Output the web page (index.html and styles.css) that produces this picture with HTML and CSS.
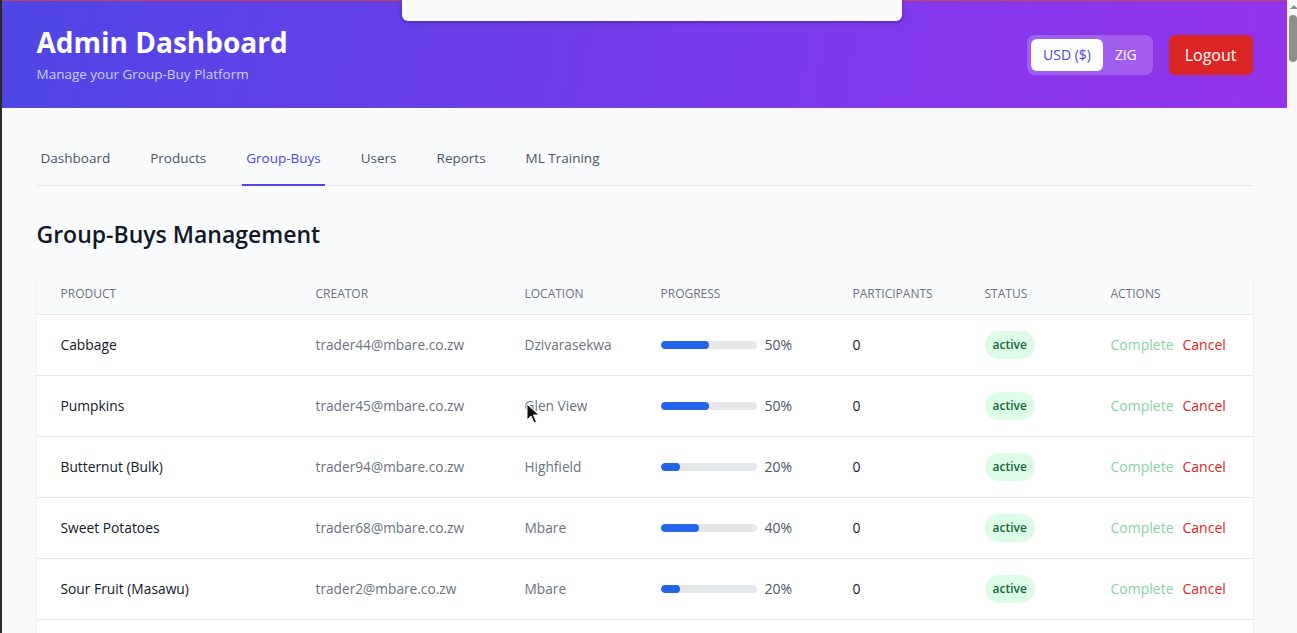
FILE: index.html
```html
<!DOCTYPE html>
<html lang="en">
<head>
<meta charset="utf-8">
<title>Admin Dashboard</title>
<link rel="stylesheet" href="styles.css">
</head>
<body>
<div class="frame-edge"></div>
<div class="page">
  <div class="topline"></div>
  <header class="hero">
    <div class="container hero-inner">
      <div class="hero-titles">
        <h1 class="hero-title">Admin Dashboard</h1>
        <p class="hero-sub">Manage your Group-Buy Platform</p>
      </div>
      <div class="hero-actions">
        <div class="currency">
          <button class="cur-btn cur-active">USD ($)</button>
          <button class="cur-btn">ZiG</button>
        </div>
        <button class="logout">Logout</button>
      </div>
    </div>
  </header>

  <main class="container main">
    <nav class="tabs">
      <a class="tab">Dashboard</a>
      <a class="tab">Products</a>
      <a class="tab tab-active">Group-Buys</a>
      <a class="tab">Users</a>
      <a class="tab">Reports</a>
      <a class="tab">ML Training</a>
    </nav>

    <h2 class="section-title">Group-Buys Management</h2>

    <div class="card">
      <table class="gb-table">
        <colgroup>
          <col class="c1"><col class="c2"><col class="c3"><col class="c4"><col class="c5"><col class="c6"><col class="c7">
        </colgroup>
        <thead>
          <tr>
            <th>Product</th><th>Creator</th><th>Location</th><th>Progress</th><th>Participants</th><th>Status</th><th>Actions</th>
          </tr>
        </thead>
        <tbody>
          <tr>
            <td class="prod">Cabbage</td><td class="muted">trader44@mbare.co.zw</td><td class="muted">Dzivarasekwa</td>
            <td><div class="prog"><div class="bar"><div class="fill" style="width:50%"></div></div><span class="pct">50%</span></div></td>
            <td class="num">0</td><td><span class="badge">active</span></td>
            <td><span class="act-complete">Complete</span><span class="act-cancel">Cancel</span></td>
          </tr>
          <tr>
            <td class="prod">Pumpkins</td><td class="muted">trader45@mbare.co.zw</td><td class="muted">Glen View</td>
            <td><div class="prog"><div class="bar"><div class="fill" style="width:50%"></div></div><span class="pct">50%</span></div></td>
            <td class="num">0</td><td><span class="badge">active</span></td>
            <td><span class="act-complete">Complete</span><span class="act-cancel">Cancel</span></td>
          </tr>
          <tr>
            <td class="prod">Butternut (Bulk)</td><td class="muted">trader94@mbare.co.zw</td><td class="muted">Highfield</td>
            <td><div class="prog"><div class="bar"><div class="fill" style="width:20%"></div></div><span class="pct">20%</span></div></td>
            <td class="num">0</td><td><span class="badge">active</span></td>
            <td><span class="act-complete">Complete</span><span class="act-cancel">Cancel</span></td>
          </tr>
          <tr>
            <td class="prod">Sweet Potatoes</td><td class="muted">trader68@mbare.co.zw</td><td class="muted">Mbare</td>
            <td><div class="prog"><div class="bar"><div class="fill" style="width:40%"></div></div><span class="pct">40%</span></div></td>
            <td class="num">0</td><td><span class="badge">active</span></td>
            <td><span class="act-complete">Complete</span><span class="act-cancel">Cancel</span></td>
          </tr>
          <tr>
            <td class="prod">Sour Fruit (Masawu)</td><td class="muted">trader2@mbare.co.zw</td><td class="muted">Mbare</td>
            <td><div class="prog"><div class="bar"><div class="fill" style="width:20%"></div></div><span class="pct">20%</span></div></td>
            <td class="num">0</td><td><span class="badge">active</span></td>
            <td><span class="act-complete">Complete</span><span class="act-cancel">Cancel</span></td>
          </tr>
          <tr class="row-empty">
            <td></td><td></td><td></td><td></td><td></td><td></td><td></td>
          </tr>
        </tbody>
      </table>
    </div>
  </main>
  <div class="popup"></div>
  <svg class="cursor" width="14" height="22" viewBox="0 0 14 22"><path d="M1 1 L1 17 L5 13 L8 20 L10.5 19 L7.5 12 L13 12 Z" fill="#111" stroke="#fff" stroke-width="1"/></svg>
</div>
<div class="scrollbar">
  <div class="sb-arrow"></div>
  <div class="sb-thumb"></div>
</div>
</body>
</html>
```
FILE: styles.css
```css
* { box-sizing: border-box; }
html, body { margin: 0; padding: 0; height: 100%; }
body {
  display: flex;
  overflow: hidden;
  background: #2d2b29;
  font-family: "Open Sans", "Noto Sans", sans-serif;
  color: #111827;
}
.frame-edge { width: 2px; flex: 0 0 2px; }
.page {
  flex: 1;
  position: relative;
  background: #f9fafb;
  overflow: hidden;
}
.topline { height: 1px; background: #c8405c; }
.container { width: 1216px; margin: 0 auto; }
.hero {
  background: linear-gradient(100deg, #4f46e5 0%, #7c3aed 60%, #9333ea 100%);
  height: 107px;
}
.hero-inner {
  display: flex;
  justify-content: space-between;
  align-items: flex-start;
  height: 100%;
  padding-top: 24px;
}
.hero-title {
  margin: 0;
  font-size: 28px;
  line-height: 34px;
  font-weight: 700;
  color: #fff;
}
.hero-sub {
  margin: 5px 0 0;
  font-size: 13.5px;
  line-height: 20px;
  color: #c7d2fe;
}
.hero-actions { display: flex; align-items: center; gap: 16px; margin-top: 10px; }
.currency {
  display: flex;
  padding: 4px;
  background: rgba(255,255,255,0.2);
  border-radius: 8px;
}
.cur-btn {
  font-family: inherit;
  border: 0;
  background: transparent;
  color: #fff;
  font-size: 14px;
  line-height: 20px;
  padding: 6px 12px;
  border-radius: 6px;
  font-weight: 500;
}
.cur-active { background: #fff; color: #4f46e5; }
.logout {
  font-family: inherit;
  border: 0;
  background: #dc2626;
  color: #fff;
  font-size: 16px;
  line-height: 24px;
  padding: 8px 16px;
  border-radius: 6px;
}
.main { padding-top: 24px; }
.tabs {
  display: flex;
  gap: 32px;
  border-bottom: 1px solid #e5e7eb;
}
.tab {
  padding: 16px 4px;
  font-size: 13.5px;
  line-height: 20px;
  font-weight: 500;
  color: #4b5563;
  margin-bottom: -1px;
  border-bottom: 2px solid transparent;
}
.tab-active { color: #4f46e5; border-bottom-color: #4f46e5; }
.section-title {
  margin: 32px 0 24px;
  font-size: 23px;
  line-height: 32px;
  font-weight: 600;
  color: #111827;
}
.card {
  background: #fff;
  border-radius: 8px;
  box-shadow: 0 1px 3px rgba(0,0,0,0.08), 0 1px 2px rgba(0,0,0,0.04);
  overflow: hidden;
}
.gb-table { width: 100%; border-collapse: collapse; table-layout: fixed; }
.c1 { width: 255px; } .c2 { width: 209px; } .c3 { width: 136px; } .c4 { width: 192px; }
.c5 { width: 132px; } .c6 { width: 126px; } .c7 { width: 166px; }
.gb-table th {
  background: #f9fafb;
  text-align: left;
  font-size: 12px;
  line-height: 16px;
  font-weight: 500;
  color: #6b7280;
  text-transform: uppercase;
  padding: 12px 24px;
  border-bottom: 1px solid #e5e7eb;
  white-space: nowrap;
}
.gb-table td {
  padding: 16px 24px;
  font-size: 14px;
  line-height: 20px;
  height: 61px;
  border-bottom: 1px solid #e5e7eb;
  white-space: nowrap;
  vertical-align: middle;
}
.gb-table td.muted { font-size: 13.7px; }
.gb-table td.prod { font-weight: 500; color: #111827; font-size: 13.8px; }
.muted { color: #6b7280; }
.num { color: #111827; }
.prog { display: flex; align-items: center; }
.bar { width: 96px; height: 8px; background: #e5e7eb; border-radius: 999px; overflow: hidden; }
.fill { height: 100%; background: #2563eb; border-radius: 999px; }
.pct { margin-left: 8px; color: #4b5563; }
.badge {
  display: inline-block;
  padding: 6px 8px;
  font-size: 12px;
  line-height: 16px;
  font-weight: 600;
  background: #dcfce7;
  color: #166534;
  border-radius: 999px;
}
.act-complete { color: #86d4a2; margin-right: 9px; }
.act-cancel { color: #dc2626; }
.popup {
  position: absolute;
  left: 400px;
  top: 0;
  width: 500px;
  height: 21px;
  background: #f9f9f9;
  border-radius: 0 0 6px 6px;
  box-shadow: 0 1px 4px rgba(0,0,0,0.35);
}
.cursor { position: absolute; left: 524px; top: 403px; }
.scrollbar {
  width: 10px;
  flex: 0 0 10px;
  background: #fafafa;
}
.sb-arrow {
  margin: 5px auto 0 3px;
  width: 0; height: 0;
  border-left: 4px solid transparent;
  border-right: 4px solid transparent;
  border-bottom: 4px solid #8a8a8a;
}
.sb-thumb {
  margin: 6px 0 0 2px;
  width: 8px;
  height: 47px;
  background: #8e8e8e;
  border-radius: 4px;
}
```
